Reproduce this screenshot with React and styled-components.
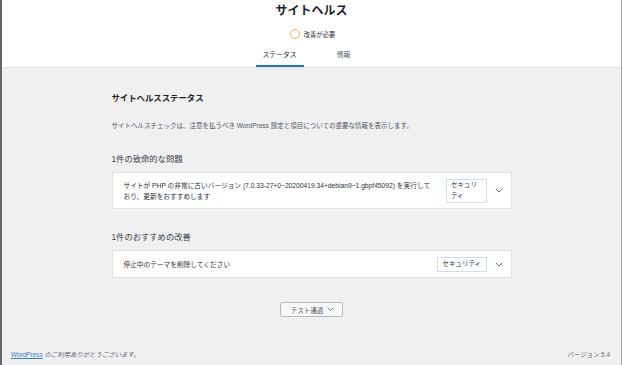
import React from "react";
import styled, { createGlobalStyle } from "styled-components";

const GlobalStyle = createGlobalStyle`
  html, body {
    margin: 0;
    padding: 0;
    width: 622px;
    height: 365px;
    overflow: hidden;
    background: #f0f0f1;
  }
  * { box-sizing: border-box; }
  body {
    font-family: "Liberation Sans", "Noto Sans CJK JP", sans-serif;
    color: #1d2327;
  }
`;

const Frame = styled.div`
  width: 622px;
  height: 365px;
  display: flex;
  flex-direction: column;
  background: #f0f0f1;
  border-left: 2px solid #666;
  border-right: 1px solid #a9a9a9;
`;

const Header = styled.header`
  background: #fff;
  border-bottom: 1px solid #e2e2e4;
  text-align: center;
  padding-top: 3px;
`;

const Title = styled.h1`
  margin: 0;
  font-size: 12px;
  line-height: 16px;
  font-weight: 700;
  color: #1d2327;
`;

const Status = styled.div`
  margin-top: 9px;
  height: 12px;
  display: flex;
  align-items: center;
  justify-content: center;
  gap: 4px;
  font-size: 6.3px;
  color: #2c3338;
  padding-left: 2px;
`;

const Ring = styled.span`
  width: 10px;
  height: 10px;
  border-radius: 50%;
  border: 1px solid #f0b849;
  display: inline-block;
`;

const Tabs = styled.nav`
  margin-top: 6px;
  display: inline-grid;
  grid-template-columns: 1fr 1fr;
`;

const Tab = styled.a`
  display: block;
  width: 48px;
  margin: 0 8px;
  padding: 4px 0 7px;
  font-size: 6.8px;
  line-height: 10px;
  color: ${(p) => (p.$active ? "#1d2327" : "#50575e")};
  box-shadow: ${(p) => (p.$active ? "inset 0 -2px #2a74b8" : "none")};
  text-decoration: none;
`;

const Main = styled.main`
  flex: 1;
  width: 400px;
  margin: 0 auto;
`;

const H2 = styled.h2`
  margin: 24px 0 0;
  font-size: 8.4px;
  line-height: 12px;
  font-weight: 700;
  color: #1d2327;
`;

const Desc = styled.p`
  margin: 17px 0 0;
  font-size: 6.5px;
  line-height: 10px;
  color: #50575e;
`;

const H3 = styled.h3`
  margin: 22px 0 7px;
  font-size: 8.3px;
  line-height: 12px;
  font-weight: 400;
  color: #3c434a;
`;

const Card = styled.div`
  display: flex;
  align-items: center;
  background: #fff;
  border: 1px solid #e0e0e2;
  padding: 5.5px 8px 5.5px 11px;
  min-height: ${(p) => (p.$tall ? "37px" : "27px")};
`;

const CardText = styled.div`
  flex: 1;
  font-size: 6.7px;
  line-height: 11px;
  color: #2c3338;
  margin-right: 10px;
`;

const Badge = styled.span`
  flex: none;
  width: ${(p) => (p.$narrow ? "41px" : "auto")};
  border: 1px solid #cfdff0;
  padding: 0.5px 4.5px;
  font-size: 6.5px;
  line-height: ${(p) => (p.$narrow ? "10.5px" : "12px")};
  color: #2c3338;
  background: #fff;
`;

const Chevron = ({ size = 8 }) => (
  <svg width={size} height={size * 0.6} viewBox="0 0 10 6" style={{ display: "block" }}>
    <path d="M1 1 L5 5 L9 1" fill="none" stroke="#50575e" strokeWidth="1.1" />
  </svg>
);

const ChevronBox = styled.span`
  flex: none;
  margin-left: 8px;
  display: flex;
  align-items: center;
  justify-content: center;
  width: 8px;
`;

const ButtonRow = styled.div`
  margin-top: 24px;
  display: flex;
  justify-content: center;
`;

const Button = styled.button`
  display: inline-flex;
  align-items: center;
  gap: 4px;
  height: 15px;
  padding: 0 8px 0 10px;
  border: 1px solid #b9bbbe;
  border-radius: 2px;
  background: #f6f7f7;
  font-family: inherit;
  font-size: 6.5px;
  color: #50575e;
  cursor: pointer;
`;

const Footer = styled.footer`
  display: flex;
  justify-content: space-between;
  padding: 0 11px 5px 9px;
  font-size: 6.4px;
  line-height: 10px;
  color: #646970;
`;

const Thanks = styled.span`
  font-style: italic;
`;

const Link = styled.a`
  color: #3582c4;
  text-decoration: underline;
`;

export default function App() {
  return (
    <>
      <GlobalStyle />
      <Frame>
        <Header>
          <Title>サイトヘルス</Title>
          <Status>
            <Ring />
            <span>改善が必要</span>
          </Status>
          <Tabs>
            <Tab $active href="#">ステータス</Tab>
            <Tab href="#">情報</Tab>
          </Tabs>
        </Header>
        <Main>
          <H2>サイトヘルスステータス</H2>
          <Desc>
            サイトヘルスチェックは、注意を払うべき WordPress 設定と項目についての重要な情報を表示します。
          </Desc>
          <H3>1件の致命的な問題</H3>
          <Card $tall>
            <CardText>
              サイトが PHP の非常に古いバージョン (7.0.33-27+0~20200419.34+debian9~1.gbpf45092) を実行しており、更新をおすすめします
            </CardText>
            <Badge $narrow>セキュリティ</Badge>
            <ChevronBox>
              <Chevron />
            </ChevronBox>
          </Card>
          <H3>1件のおすすめの改善</H3>
          <Card>
            <CardText>停止中のテーマを削除してください</CardText>
            <Badge>セキュリティ</Badge>
            <ChevronBox>
              <Chevron />
            </ChevronBox>
          </Card>
          <ButtonRow>
            <Button>
              テスト通過
              <Chevron size={7} />
            </Button>
          </ButtonRow>
        </Main>
        <Footer>
          <Thanks>
            <Link href="#">WordPress</Link> のご利用ありがとうございます。
          </Thanks>
          <span>バージョン 5.4</span>
        </Footer>
      </Frame>
    </>
  );
}
